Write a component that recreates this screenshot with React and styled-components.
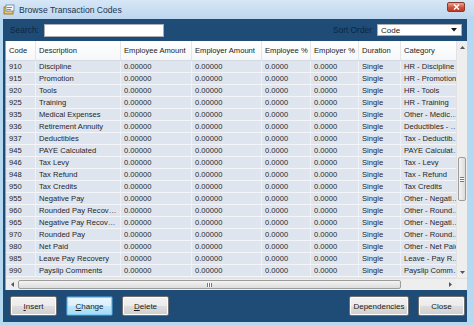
import React from "react";
import styled, { createGlobalStyle } from "styled-components";

const GlobalStyle = createGlobalStyle`
  html, body {
    margin: 0;
    padding: 0;
    background: #ffffff;
  }
  * {
    box-sizing: border-box;
  }
`;

const columns = [
  { key: "code", label: "Code", width: 30 },
  { key: "desc", label: "Description", width: 85 },
  { key: "eeAmt", label: "Employee Amount", width: 71 },
  { key: "erAmt", label: "Employer Amount", width: 70 },
  { key: "eePct", label: "Employee %", width: 49 },
  { key: "erPct", label: "Employer %", width: 48 },
  { key: "dur", label: "Duration", width: 42 },
  { key: "cat", label: "Category", width: 64 },
];

const rows = [
  ["910", "Discipline", "HR - Discipline"],
  ["915", "Promotion", "HR - Promotion"],
  ["920", "Tools", "HR - Tools"],
  ["925", "Training", "HR - Training"],
  ["935", "Medical Expenses", "Other - Medical Expenses"],
  ["936", "Retirement Annuity", "Deductibles - Retirement"],
  ["937", "Deductibles", "Tax - Deductibles"],
  ["945", "PAYE Calculated", "PAYE Calculated"],
  ["946", "Tax Levy", "Tax - Levy"],
  ["948", "Tax Refund", "Tax - Refund"],
  ["950", "Tax Credits", "Tax Credits"],
  ["955", "Negative Pay", "Other - Negative Pay"],
  ["960", "Rounded Pay Recovery", "Other - Rounded Pay"],
  ["965", "Negative Pay Recovery", "Other - Negative Pay"],
  ["970", "Rounded Pay", "Other - Rounded Pay"],
  ["980", "Net Paid", "Other - Net Paid"],
  ["985", "Leave Pay Recovery", "Leave - Pay Recovery"],
  ["990", "Payslip Comments", "Payslip Comments"],
];

const App = () => {
  return (
    <>
      <GlobalStyle />
      <Window>
        <TitleBar>
          <TitleIcon viewBox="0 0 12 12">
            <rect x="1" y="3" width="9" height="7" fill="#e9c46a" stroke="#8a6d1f" strokeWidth="0.8" />
            <rect x="3" y="1" width="8" height="6" fill="#f7f7f7" stroke="#6b7f95" strokeWidth="0.8" />
            <rect x="4" y="3" width="5" height="0.8" fill="#4a77a8" />
            <rect x="4" y="5" width="4" height="0.8" fill="#4a77a8" />
          </TitleIcon>
          <Title>Browse Transaction Codes</Title>
          <CloseBox>
            <svg width="7" height="6" viewBox="0 0 7 6">
              <path d="M1 0.5 L6 5.5 M6 0.5 L1 5.5" stroke="#fff" strokeWidth="1.5" />
            </svg>
          </CloseBox>
        </TitleBar>

        <Body>
          <Toolbar>
            <Label>Search:</Label>
            <SearchInput />
            <Spacer />
            <Label>Sort Order</Label>
            <Select>
              <span>Code</span>
              <svg width="6" height="4" viewBox="0 0 6 4">
                <path d="M0 0 L6 0 L3 3.5 Z" fill="#111" />
              </svg>
            </Select>
          </Toolbar>

          <GridFrame>
            <GridTop>
              <GridMain>
                <HeaderRow>
                  {columns.map((c) => (
                    <HeadCell key={c.key} $w={c.width}>
                      {c.label}
                    </HeadCell>
                  ))}
                </HeaderRow>
                {rows.map(([code, desc, cat]) => (
                  <Row key={code}>
                    <Cell $w={30}>{code}</Cell>
                    <Cell $w={85}>{desc}</Cell>
                    <Cell $w={71}>0.00000</Cell>
                    <Cell $w={70}>0.00000</Cell>
                    <Cell $w={49}>0.0000</Cell>
                    <Cell $w={48}>0.0000</Cell>
                    <Cell $w={42}>Single</Cell>
                    <Cell $w={64}>{cat}</Cell>
                  </Row>
                ))}
              </GridMain>
              <VScroll>
                <ArrowBox>
                  <svg width="5" height="3" viewBox="0 0 5 3">
                    <path d="M0 3 L2.5 0 L5 3 Z" fill="#555" />
                  </svg>
                </ArrowBox>
                <VTrack>
                  <VThumb>
                    <Grip />
                  </VThumb>
                </VTrack>
                <ArrowBox>
                  <svg width="5" height="3" viewBox="0 0 5 3">
                    <path d="M0 0 L5 0 L2.5 3 Z" fill="#555" />
                  </svg>
                </ArrowBox>
              </VScroll>
            </GridTop>
            <HScroll>
              <HArrow>
                <svg width="3" height="5" viewBox="0 0 3 5">
                  <path d="M3 0 L0 2.5 L3 5 Z" fill="#555" />
                </svg>
              </HArrow>
              <HTrack>
                <HThumb>
                  <HGrip />
                </HThumb>
              </HTrack>
              <HArrow>
                <svg width="3" height="5" viewBox="0 0 3 5">
                  <path d="M0 0 L3 2.5 L0 5 Z" fill="#555" />
                </svg>
              </HArrow>
              <Corner />
            </HScroll>
          </GridFrame>

          <ButtonBar>
            <Button>
              <u>I</u>nsert
            </Button>
            <Button $focused>
              <u>C</u>hange
            </Button>
            <Button>
              <u>D</u>elete
            </Button>
            <Spacer />
            <Button $wide>Dependencies</Button>
            <Button>Close</Button>
          </ButtonBar>
        </Body>
      </Window>
    </>
  );
};

const Window = styled.div`
  width: 474px;
  height: 325px;
  display: flex;
  flex-direction: column;
  background: #b4d9f1;
  padding: 0 7px 3px 3px;
  font-family: "Liberation Sans", Arial, sans-serif;
  font-size: 7.6px;
  color: #1a1a1a;
  overflow: hidden;
`;

const TitleBar = styled.div`
  height: 19px;
  margin: 0 -7px 0 -3px;
  padding: 0 9px 0 3px;
  display: flex;
  align-items: center;
  gap: 4px;
  background: linear-gradient(#d6e7f6, #bdd6ee);
`;

const TitleIcon = styled.svg`
  width: 12px;
  height: 12px;
`;

const Title = styled.div`
  flex: 1;
  font-size: 8.6px;
  color: #1c3550;
`;

const CloseBox = styled.div`
  width: 18px;
  height: 10px;
  margin-top: -6px;
  display: flex;
  align-items: center;
  justify-content: center;
  border: 1px solid #8a3a2c;
  border-radius: 2px;
  background: linear-gradient(#eba796, #d0533b 55%, #bf3c25);
`;

const Body = styled.div`
  flex: 1;
  display: flex;
  flex-direction: column;
  background: #1f4c76;
`;

const Toolbar = styled.div`
  height: 22px;
  display: flex;
  align-items: center;
  padding: 0 5px 0 7px;
  gap: 5px;
`;

const Label = styled.span`
  color: #0c2640;
  font-size: 8.4px;
`;

const SearchInput = styled.div`
  width: 120px;
  height: 13px;
  background: #ffffff;
  border: 1px solid #abadb3;
`;

const Spacer = styled.div`
  flex: 1;
`;

const Select = styled.div`
  width: 85px;
  height: 12px;
  display: flex;
  align-items: center;
  justify-content: space-between;
  padding: 0 4px 0 3px;
  background: #ffffff;
  border: 1px solid #abadb3;
  font-size: 8px;
`;

const GridFrame = styled.div`
  margin: 0 0 0 2px;
  display: flex;
  flex-direction: column;
  background: #e4e9f1;
  border-left: 1px solid #8ea4bd;
`;

const GridTop = styled.div`
  height: 237px;
  display: flex;
`;

const GridMain = styled.div`
  flex: 1;
  min-width: 0;
  overflow: hidden;
  background: #dfe5ee;
`;

const HeaderRow = styled.div`
  height: 20px;
  display: flex;
  background: linear-gradient(#ffffff, #f6f7f9);
  border-bottom: 1px solid #d5dae2;
`;

const HeadCell = styled.div`
  width: ${(p) => p.$w}px;
  flex: none;
  padding: 0 3px;
  display: flex;
  align-items: center;
  white-space: nowrap;
  overflow: hidden;
  border-right: 1px solid #e3e6eb;
  color: #222;
`;

const Row = styled.div`
  height: 12px;
  display: flex;
  border-bottom: 1px solid #f3f5f9;
`;

const Cell = styled.div`
  width: ${(p) => p.$w}px;
  flex: none;
  padding: 0 3px;
  line-height: 11px;
  white-space: nowrap;
  overflow: hidden;
  text-overflow: ellipsis;
  border-right: 1px solid #eef1f6;
  color: #262626;
`;

const VScroll = styled.div`
  width: 11px;
  flex: none;
  display: flex;
  flex-direction: column;
  background: #eeeeee;
  border-left: 1px solid #e2e2e2;
`;

const ArrowBox = styled.div`
  height: 12px;
  display: flex;
  align-items: center;
  justify-content: center;
`;

const VTrack = styled.div`
  flex: 1;
  padding-top: 104px;
`;

const VThumb = styled.div`
  height: 44px;
  margin: 0 1px;
  display: flex;
  align-items: center;
  justify-content: center;
  border: 1px solid #9c9c9c;
  border-radius: 2px;
  background: linear-gradient(90deg, #f4f4f4, #dcdcdc);
`;

const Grip = styled.div`
  width: 4px;
  height: 5px;
  border-top: 1px solid #777;
  border-bottom: 1px solid #777;
  background: linear-gradient(#fff 40%, #777 40%, #777 60%, #fff 60%);
`;

const HScroll = styled.div`
  height: 12px;
  display: flex;
  background: #eeeeee;
  border-top: 1px solid #e2e2e2;
`;

const HArrow = styled.div`
  width: 12px;
  display: flex;
  align-items: center;
  justify-content: center;
`;

const HTrack = styled.div`
  flex: 1;
  display: flex;
  padding: 1px 0;
`;

const HThumb = styled.div`
  width: 383px;
  display: flex;
  align-items: center;
  justify-content: center;
  border: 1px solid #9c9c9c;
  border-radius: 2px;
  background: linear-gradient(#f4f4f4, #dcdcdc);
`;

const HGrip = styled.div`
  width: 5px;
  height: 4px;
  border-left: 1px solid #777;
  border-right: 1px solid #777;
  background: linear-gradient(90deg, #fff 40%, #777 40%, #777 60%, #fff 60%);
`;

const Corner = styled.div`
  width: 11px;
  background: #f0f0f0;
`;

const ButtonBar = styled.div`
  flex: 1;
  display: flex;
  align-items: center;
  gap: 9px;
  padding: 0 2px 0 7px;
`;

const Button = styled.button`
  width: ${(p) => (p.$wide ? 60 : 47)}px;
  height: 20px;
  padding: 0;
  font-family: "Liberation Sans", Arial, sans-serif;
  font-size: 8px;
  color: #1a1a1a;
  border: 1px solid ${(p) => (p.$focused ? "#3c7fb1" : "#707070")};
  border-radius: 2px;
  background: ${(p) =>
    p.$focused
      ? "linear-gradient(#eaf6fd, #d9f0fc 50%, #bee6fd 51%, #a7d9f5)"
      : "linear-gradient(#f2f2f2, #ebebeb 50%, #dddddd 51%, #cfcfcf)"};
  box-shadow: inset 0 0 0 1px ${(p) => (p.$focused ? "#7ad0f5" : "#fcfcfc")};
  u {
    text-decoration: underline;
  }
`;

export default App;
